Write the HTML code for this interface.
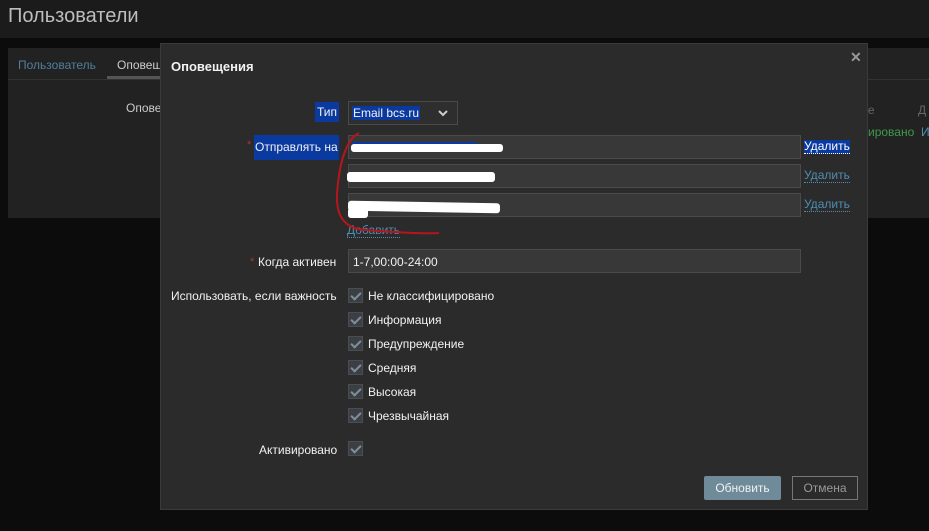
<!DOCTYPE html>
<html><head><meta charset="utf-8"><style>
*{box-sizing:border-box;margin:0;padding:0}
body{width:929px;height:531px;background:#0c0c0c;font-family:"Liberation Sans",Arial,sans-serif;font-size:12px;color:#f2f2f2;position:relative;overflow:hidden;white-space:nowrap}
.abs{position:absolute}
.hdr{left:0;top:0;width:929px;height:38px;background:#1b1b1b}
.hdr span{position:absolute;left:8px;top:5px;font-size:20px;color:#bdbdbd}
.panel{left:8px;top:48px;width:921px;height:170px;background:#222}
.modal{left:160px;top:43px;width:708px;height:467px;background:#2b2b2b;border:1px solid #3a3a3a}
.lbl{text-align:right;color:#f2f2f2}
.sel{background:#0a3aa0}
.inp{background:#383838;border:1px solid #4a4a4a;height:24px}
.link{color:#4f8eb0;border-bottom:1px dotted #4f8eb0;line-height:13px}
.cb{width:15px;height:15px;background:#3b3f44;border:1px solid #4a4e53}
.cb:after{content:"";position:absolute;left:4px;top:1px;width:4px;height:8px;border:solid #7f8f9a;border-width:0 2px 2px 0;transform:rotate(45deg)}
.wh{background:#fff;border-radius:3px}
</style></head><body>
<div class="abs hdr"><span>Пользователи</span></div>
<div class="abs panel">
 <div class="abs" style="left:10px;top:10px;color:#4f7f9c">Пользователь</div>
 <div class="abs" style="left:109px;top:10px;color:#ccc">Оповещения</div>
 <div class="abs" style="left:99px;top:28px;width:60px;height:3px;background:#555"></div>
 <div class="abs" style="left:0;top:31px;width:921px;height:1px;background:#333"></div>
 <div class="abs" style="left:118px;top:53px;color:#ccc">Оповещения</div>
 <div class="abs" style="left:840px;top:55px;color:#666">яние</div>
 <div class="abs" style="left:910px;top:55px;color:#666">Д</div>
 <div class="abs" style="left:860px;top:77px;color:#3e9a4e">ировано</div>
 <div class="abs" style="left:913px;top:77px;color:#4f8eb0">И</div>
</div>
<div class="abs modal">
 <div class="abs" style="left:10px;top:15px;font-size:13px;font-weight:bold;color:#f2f2f2">Оповещения</div>
 <div class="abs" style="left:689px;top:5px;font-size:14px;color:#999;font-weight:bold">✕</div>
 <div class="abs lbl sel" style="left:154px;top:58px;padding:3px 2px">Тип</div>
 <div class="abs inp" style="left:187px;top:57px;width:110px;background:#2e2e2e"><span class="sel abs" style="left:3px;top:4px;padding:0 1px">Email bcs.ru</span>
  <svg class="abs" style="left:89px;top:8px" width="10" height="7"><path d="M1 1 L5 5 L9 1" fill="none" stroke="#ccc" stroke-width="2"/></svg></div>
 <div class="abs" style="left:86px;top:95px;color:#a33;font-size:11px">*</div>
 <div class="abs sel" style="left:93px;top:91px;height:25px;padding:5px 1px">Отправлять на</div>
 <div class="abs inp" style="left:187px;top:91px;width:453px"></div>
 <div class="abs inp" style="left:187px;top:120px;width:453px"></div>
 <div class="abs inp" style="left:187px;top:149px;width:453px"></div>
 <div class="abs sel" style="left:191px;top:98px;width:125px;height:10px"></div>
 <div class="abs wh" style="left:190px;top:100px;width:152px;height:8px"></div>
 <div class="abs wh" style="left:186px;top:128px;width:148px;height:10px"></div>
 <div class="abs wh" style="left:187px;top:158px;width:152px;height:10px;transform:rotate(1deg)"></div>
 <div class="abs wh" style="left:187px;top:164px;width:20px;height:10px"></div>
 <div class="abs link sel" style="left:643px;top:96px;color:#fff;border-bottom-color:#fff">Удалить</div>
 <div class="abs link" style="left:643px;top:125px">Удалить</div>
 <div class="abs link" style="left:643px;top:154px">Удалить</div>
 <div class="abs link" style="left:186px;top:180px">Добавить</div>
 <svg class="abs" style="left:0;top:0" width="708" height="467"><path d="M198 89 C185 95 178 120 176 150 C175 170 182 185 205 186 C230 188 260 190 278 189" fill="none" stroke="#b5161c" stroke-width="2"/></svg>
 <div class="abs" style="left:89px;top:212px;color:#a33;font-size:11px">*</div>
 <div class="abs lbl" style="left:97px;top:211px">Когда активен</div>
 <div class="abs inp" style="left:187px;top:205px;width:453px"><span class="abs" style="left:4px;top:5px">1-7,00:00-24:00</span></div>
 <div class="abs lbl" style="left:10px;top:245px">Использовать, если важность</div>
 <div class="abs cb" style="left:187px;top:244px"></div><div class="abs" style="left:207px;top:245px">Не классифицировано</div>
 <div class="abs cb" style="left:187px;top:268px"></div><div class="abs" style="left:207px;top:269px">Информация</div>
 <div class="abs cb" style="left:187px;top:292px"></div><div class="abs" style="left:207px;top:293px">Предупреждение</div>
 <div class="abs cb" style="left:187px;top:316px"></div><div class="abs" style="left:207px;top:317px">Средняя</div>
 <div class="abs cb" style="left:187px;top:340px"></div><div class="abs" style="left:207px;top:341px">Высокая</div>
 <div class="abs cb" style="left:187px;top:364px"></div><div class="abs" style="left:207px;top:365px">Чрезвычайная</div>
 <div class="abs lbl" style="left:98px;top:399px">Активировано</div>
 <div class="abs cb" style="left:187px;top:397px"></div>
 <div class="abs" style="left:543px;top:432px;width:77px;height:24px;background:#6f8a99;border-radius:2px;color:#f2f2f2;text-align:center;line-height:24px">Обновить</div>
 <div class="abs" style="left:631px;top:432px;width:66px;height:24px;border:1px solid #777;color:#999;text-align:center;line-height:22px">Отмена</div>
</div>
</body></html>
